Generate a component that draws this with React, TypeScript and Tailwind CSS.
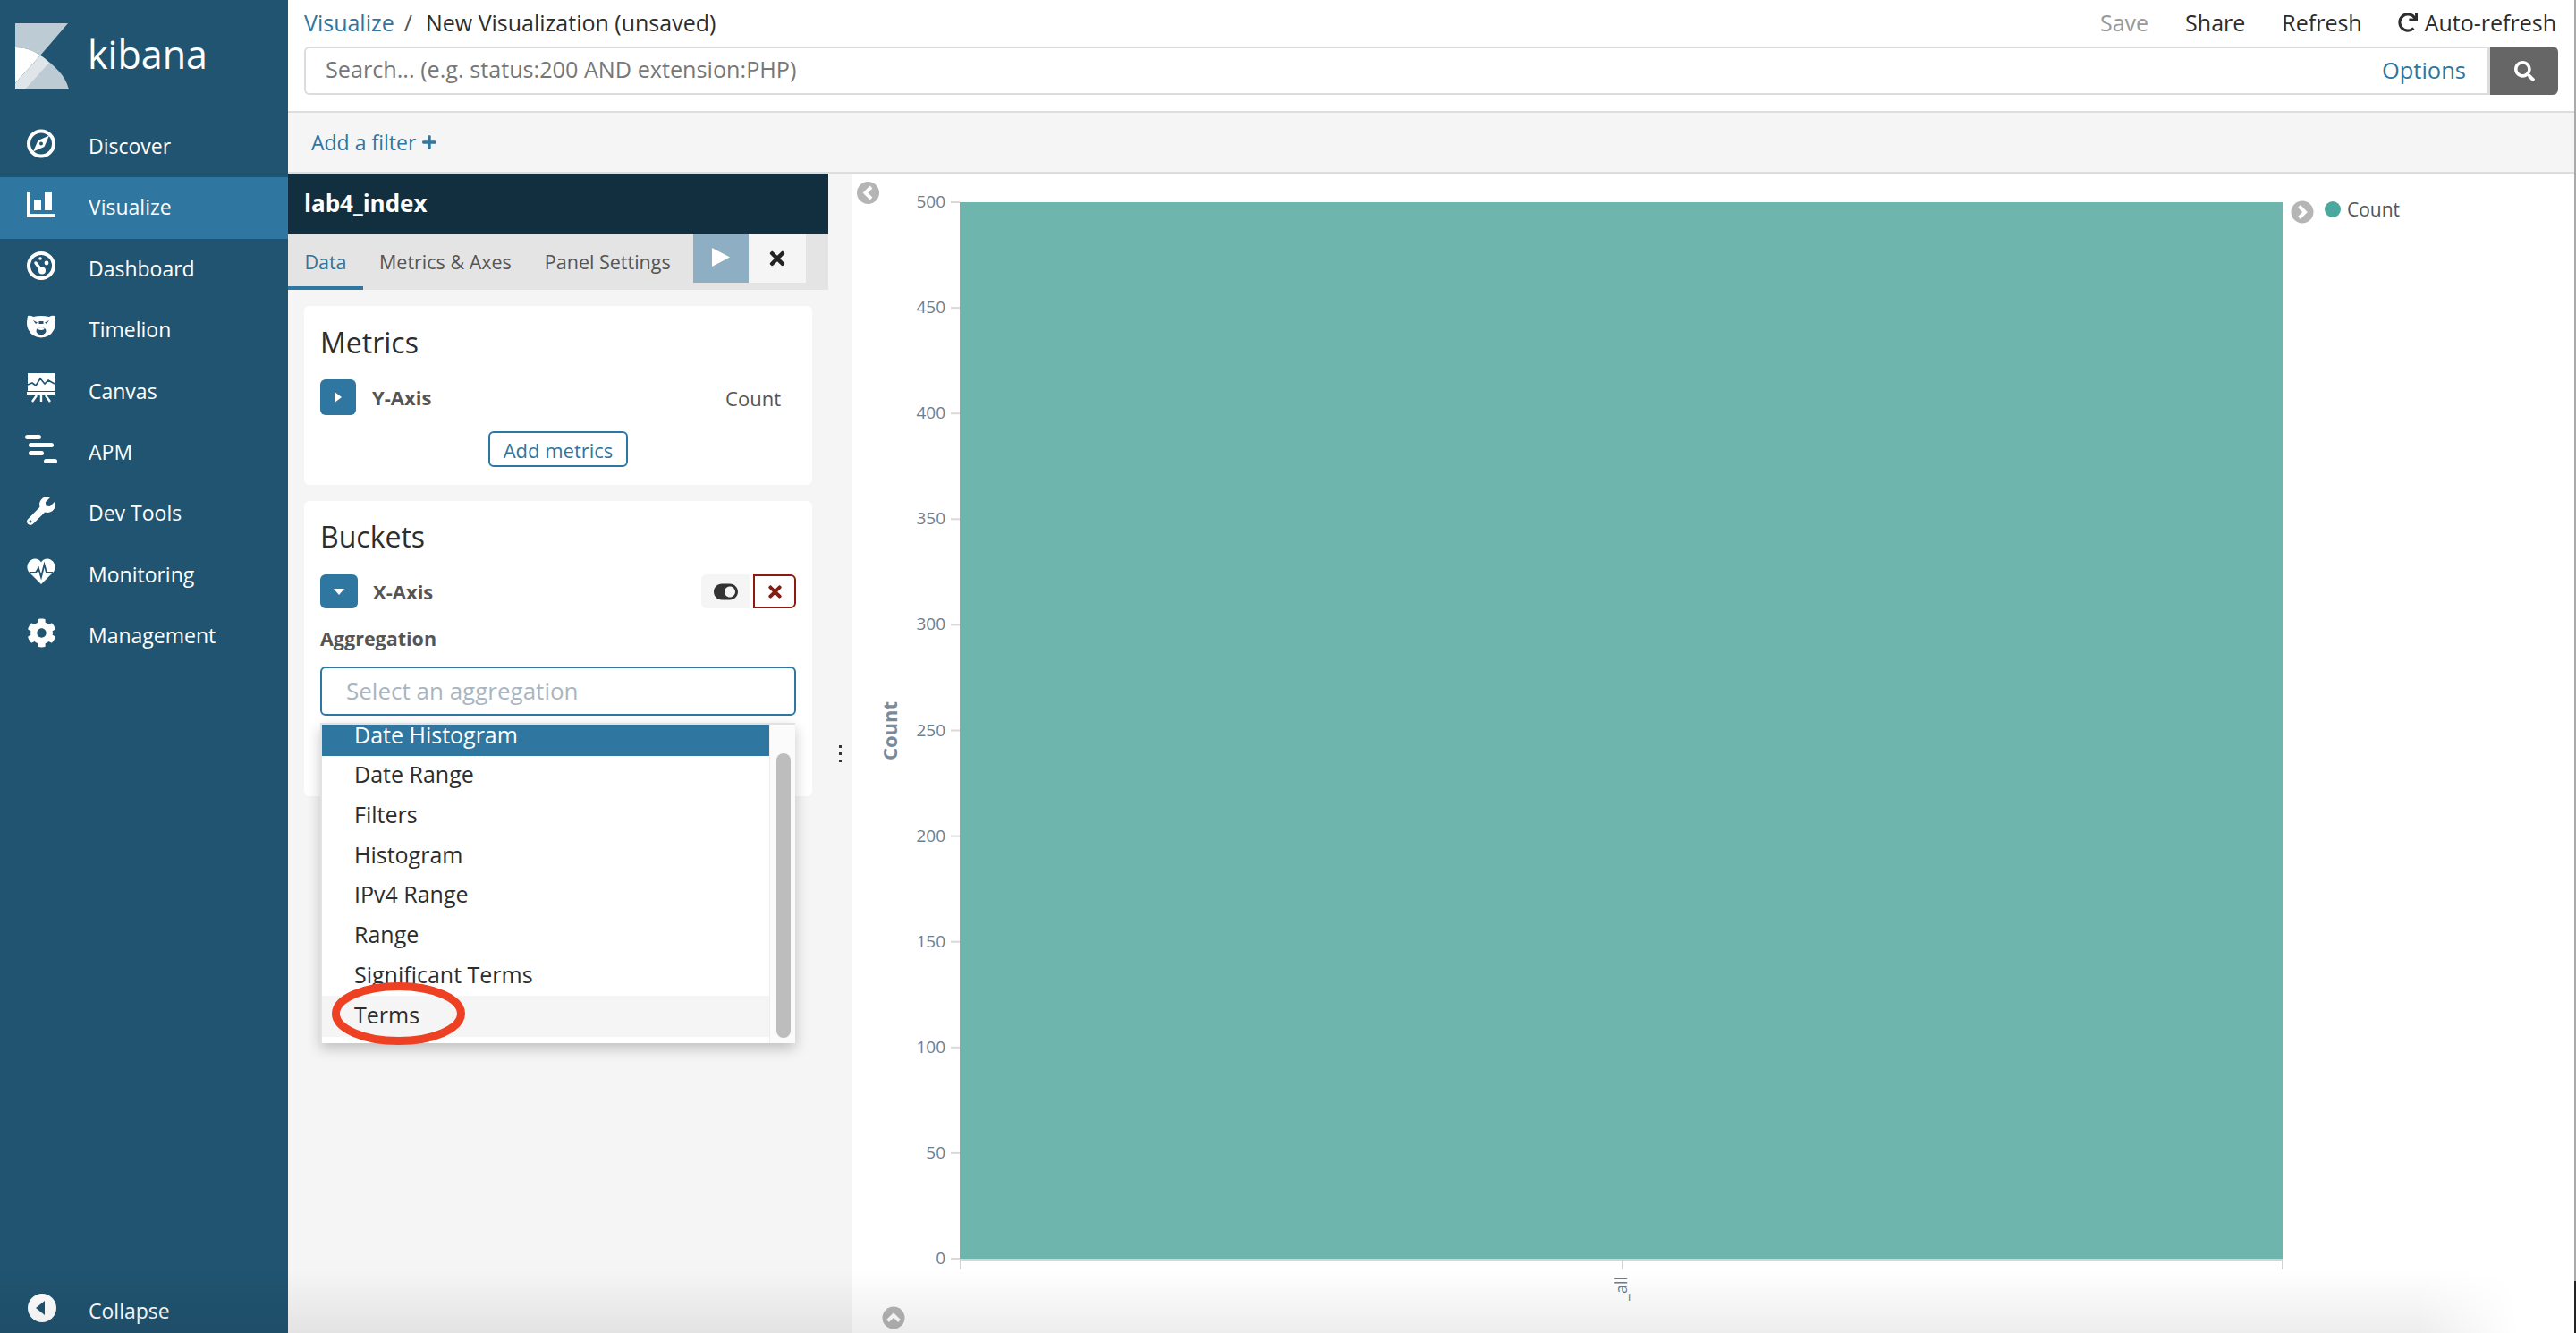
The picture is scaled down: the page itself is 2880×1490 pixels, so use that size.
import { FaCog, FaPlus, FaRedo, FaSearch, FaTimes, FaToggleOn, FaWrench } from "react-icons/fa";

const SIDEBAR_BG = "#215470";

function KibanaLogo() {
  return (
    <svg width="60" height="74" viewBox="0 0 60 74">
      <path d="M0 0H59L28 36C20 30 10 27 0 27Z" fill="#bdcbd4" />
      <path d="M28 36C44 47 56 58 60 74H11Z" fill="#bdcbd4" />
      <path d="M0 27C10 27 20 30 28 36L0 67Z" fill="#ffffff" />
      <path d="M28 36C32 38 34 40 38 44L11 74H0V67Z" fill="#dfe5e9" />
    </svg>
  );
}

function CompassIcon() {
  return (
    <svg width="32" height="33" viewBox="0 0 32 33" fill="none">
      <circle cx="16" cy="16.5" r="14" stroke="#fff" strokeWidth="4" />
      <path d="M25 7.5L19.5 20L7 25.5L12.5 13Z" fill="#fff" />
      <circle cx="16" cy="16.5" r="2" fill={SIDEBAR_BG} />
    </svg>
  );
}

function BarsIcon() {
  return (
    <svg width="32" height="28" viewBox="0 0 32 28" fill="#fff">
      <path d="M0 0H4V24H32V28H0Z" />
      <rect x="8" y="8" width="8" height="12" />
      <rect x="20" y="0" width="8" height="20" />
    </svg>
  );
}

function GaugeIcon() {
  return (
    <svg width="32" height="32" viewBox="0 0 32 32" fill="none">
      <circle cx="16" cy="16" r="14" stroke="#fff" strokeWidth="4" />
      <path d="M10 13L16 21" stroke="#fff" strokeWidth="3.5" strokeLinecap="round" />
      <circle cx="17" cy="21.5" r="4" fill="#fff" />
      <circle cx="22" cy="13" r="2.4" fill="#fff" />
      <circle cx="15" cy="8" r="1.8" fill="#fff" />
    </svg>
  );
}

function BearIcon() {
  return (
    <svg width="32" height="26" viewBox="0 0 32 26">
      <path
        d="M1 1Q4 0 7 2Q16 0 25 2Q28 0 31 1L32 8Q32 14 30 17Q26 25 16 25.5Q6 25 2 17Q0 14 0 8Z"
        fill="#fff"
      />
      <path d="M7 6L12 8.5L10 10Z M25 6L20 8.5L22 10Z" fill={SIDEBAR_BG} />
      <rect x="13.5" y="7" width="5" height="3" fill={SIDEBAR_BG} />
      <ellipse cx="16" cy="18" rx="5.5" ry="4.2" fill={SIDEBAR_BG} />
      <ellipse cx="16" cy="15.5" rx="3.5" ry="1.4" fill="#fff" />
    </svg>
  );
}

function CanvasIcon() {
  return (
    <svg width="32" height="33" viewBox="0 0 32 33" fill="none">
      <rect x="1" y="0" width="30" height="20" fill="#fff" />
      <path d="M1 13L6 11L10 14L15 6L20 12L24 8L31 12" stroke={SIDEBAR_BG} strokeWidth="1.6" />
      <rect x="0" y="21" width="32" height="3" fill="#fff" />
      <path d="M11 25L6 32M16 25V32M21 25L26 32" stroke="#fff" strokeWidth="2.4" />
    </svg>
  );
}

function ApmIcon() {
  return (
    <svg width="36" height="32" viewBox="0 0 36 32" fill="#fff" className="ml-[-2px]">
      <rect x="0" y="0" width="18" height="5" rx="2.5" />
      <rect x="4" y="9" width="28" height="5" rx="2.5" />
      <rect x="4" y="18" width="17" height="5" rx="2.5" />
      <rect x="21" y="27" width="15" height="5" rx="2.5" />
    </svg>
  );
}

function HeartIcon() {
  return (
    <svg width="32" height="29" viewBox="0 0 32 29" fill="none">
      <path d="M16 29L2 15C-2 9 2 1 9 0.5C12 0.5 14.5 2 16 4.5C17.5 2 20 0.5 23 0.5C30 1 34 9 30 15Z" fill="#fff" />
      <path d="M3 16H10L13 11L16 21L19.5 7L22 16H29" stroke={SIDEBAR_BG} strokeWidth="1.8" />
    </svg>
  );
}

function CollapseIcon() {
  return (
    <svg width="32" height="32" viewBox="0 0 32 32">
      <circle cx="16" cy="16" r="16" fill="#fff" />
      <path d="M19 8V24L9 16Z" fill={SIDEBAR_BG} />
    </svg>
  );
}

const navItems = [
  { label: "Discover", icon: <CompassIcon /> },
  { label: "Visualize", icon: <BarsIcon />, active: true },
  { label: "Dashboard", icon: <GaugeIcon /> },
  { label: "Timelion", icon: <BearIcon /> },
  { label: "Canvas", icon: <CanvasIcon /> },
  { label: "APM", icon: <ApmIcon /> },
  { label: "Dev Tools", icon: <FaWrench size={32} color="#fff" /> },
  { label: "Monitoring", icon: <HeartIcon /> },
  { label: "Management", icon: <FaCog size={33} color="#fff" /> },
];

function Sidebar() {
  return (
    <aside className="flex h-full w-[322px] shrink-0 flex-col bg-[#215470] text-white">
      <div className="flex h-[130px] items-start pl-[17px] pt-[26px]">
        <KibanaLogo />
        <span className="ml-[21px] mt-[7px] text-[43px] leading-[56px]">kibana</span>
      </div>
      {navItems.map((item) => (
        <div
          key={item.label}
          className={`flex h-[68.4px] items-center pl-[30px] ${item.active ? "bg-[#2f76a0]" : ""}`}
        >
          <span className="mb-[8px] flex w-[69px]">{item.icon}</span>
          <span className="pb-[2px] text-[23px] font-medium">{item.label}</span>
        </div>
      ))}
      <div className="mt-auto flex h-[60px] items-start pl-[31px] pt-[16px]">
        <CollapseIcon />
        <span className="ml-[36px] mt-[3px] text-[23px] leading-[32px]">Collapse</span>
      </div>
    </aside>
  );
}

function TopBar() {
  return (
    <header className="h-[126px] border-b-2 border-[#dddddd] bg-white">
      <div className="flex h-[52px] items-start justify-between pl-[18px] pr-[20px] pt-[9px] text-[25px] leading-[32px] text-[#2d2d2d]">
        <div className="flex">
          <span className="text-[#2f76a0]">Visualize</span>
          <span className="ml-[11px] text-[#555]">/</span>
          <span className="ml-[15px]">New Visualization (unsaved)</span>
        </div>
        <div className="flex items-center">
          <span className="text-[#999]">Save</span>
          <span className="ml-[41px]">Share</span>
          <span className="ml-[41px]">Refresh</span>
          <FaRedo size={22} color="#2d2d2d" className="ml-[40px]" />
          <span className="ml-[8px]">Auto-refresh</span>
        </div>
      </div>
      <div className="flex h-[54px] pl-[18px] pr-[18px]">
        <div className="flex flex-1 items-center justify-between rounded-l-[6px] border-2 border-r-[3px] border-[#dcdcdc] pb-[2px] pl-[22px] pr-[24px] text-[25.2px]">
          <span className="text-[#777]">Search... (e.g. status:200 AND extension:PHP)</span>
          <span className="text-[25.5px] text-[#2f76a0]">Options</span>
        </div>
        <div className="flex w-[76px] items-center justify-center rounded-r-[6px] bg-[#666666]">
          <FaSearch size={23} color="#fff" />
        </div>
      </div>
    </header>
  );
}

function FilterBar() {
  return (
    <div className="flex h-[68px] items-center border-b-2 border-[#dddddd] bg-[#f5f5f5] pl-[26px] text-[23px] text-[#2f76a0]">
      <span>Add a filter</span>
      <FaPlus size={18} className="ml-[6px]" />
    </div>
  );
}

function EditorTabs() {
  return (
    <div className="flex h-[62px] items-start bg-[#e4e4e4] text-[21.5px] text-[#555]">
      <div className="flex h-[62px] w-[84px] items-center justify-center border-b-4 border-[#2f76a0] pt-[4px] text-[#2f76a0]">
        Data
      </div>
      <div className="flex h-[62px] items-center pl-[18px]">Metrics &amp; Axes</div>
      <div className="flex h-[62px] items-center pl-[37px]">Panel Settings</div>
      <div className="ml-[25px] flex h-[54px] w-[62px] items-center justify-center bg-[#8eaec3] pb-[3px]">
        <svg width="20" height="21" viewBox="0 0 20 21">
          <path d="M0 0L20 10.5L0 21Z" fill="#fff" />
        </svg>
      </div>
      <div className="flex h-[54px] w-[64px] items-center justify-center bg-[#f5f5f5]">
        <FaTimes size={24} color="#222" />
      </div>
    </div>
  );
}

function MetricsCard() {
  return (
    <section className="h-[200px] rounded-[6px] bg-white pl-[18px] pr-[35px] pt-[18px]">
      <h2 className="h-[46px] text-[32px] leading-[46px] text-[#2d2d2d]">Metrics</h2>
      <div className="mt-[18px] flex h-[40px] items-center text-[22px] text-[#555]">
        <div className="flex h-[40px] w-[40px] items-center justify-center rounded-[6px] bg-[#2f76a0]">
          <svg width="8" height="12" viewBox="0 0 8 12">
            <path d="M0 0L8 6L0 12Z" fill="#fff" />
          </svg>
        </div>
        <span className="ml-[18px] font-bold">Y-Axis</span>
        <span className="ml-auto pt-[2px]">Count</span>
      </div>
      <div className="mt-[18px] flex justify-center">
        <button className="ml-[17px] h-[40px] w-[156px] rounded-[6px] border-2 border-[#2f76a0] pt-[2px] text-[22px] text-[#2f76a0]">
          Add metrics
        </button>
      </div>
    </section>
  );
}

const aggregations = ["Date Histogram", "Date Range", "Filters", "Histogram", "IPv4 Range", "Range", "Significant Terms", "Terms"];

function AggregationDropdown() {
  return (
    <div className="absolute left-[18px] top-[248px] z-10 flex h-[358px] w-[531px] overflow-visible border-t-2 border-l-2 border-[#e2e2e2] bg-white shadow-[0_6px_14px_rgba(0,0,0,0.22)]">
      <ul className="h-full w-[500px] overflow-hidden text-[25px] text-[#2d2d2d]">
        {aggregations.map((name, i) => (
          <li
            key={name}
            className={`flex h-[44.7px] items-center pb-[2px] pl-[36px] ${i === 0 ? "mt-[-10px] bg-[#2f76a0] text-white" : ""} ${
              name === "Terms" ? "h-[46px] bg-[#f5f5f5]" : ""
            }`}
          >
            {name}
          </li>
        ))}
      </ul>
      <div className="h-full flex-1 border-l border-[#eeeeee] bg-[#fbfbfb] pl-[7px] pt-[32px]">
        <div className="h-[318px] w-[16px] rounded-full bg-[#bdbdbd]" />
      </div>
      <svg className="absolute left-[11px] top-[288px]" width="149" height="70" viewBox="0 0 149 70" fill="none">
        <ellipse cx="74.5" cy="35" rx="70" ry="30.5" stroke="#ee4023" strokeWidth="9" />
      </svg>
    </div>
  );
}

function BucketsCard() {
  return (
    <section className="relative mt-[18px] h-[330px] rounded-[6px] bg-white pl-[18px] pr-[18px] pt-[17px]">
      <h2 className="h-[46px] text-[32px] leading-[46px] text-[#2d2d2d]">Buckets</h2>
      <div className="mt-[19px] flex h-[38px] items-center text-[22px] text-[#555]">
        <div className="flex h-[38px] w-[42px] items-center justify-center rounded-[6px] bg-[#2f76a0]">
          <svg width="12" height="7" viewBox="0 0 12 7">
            <path d="M0 0H12L6 7Z" fill="#fff" />
          </svg>
        </div>
        <span className="ml-[17px] font-bold">X-Axis</span>
        <div className="ml-auto flex h-[38px] w-[54px] items-center justify-center rounded-l-[6px] bg-[#f5f5f5]">
          <FaToggleOn size={27} color="#333" />
        </div>
        <div className="ml-[4px] flex h-[38px] w-[48px] items-center justify-center rounded-r-[6px] border-2 border-[#8b1a10]">
          <FaTimes size={21} color="#8b1a10" />
        </div>
      </div>
      <div className="mt-[19px] text-[21.5px] font-bold leading-[30px] text-[#555]">Aggregation</div>
      <div className="mt-[16px] flex h-[55px] items-center rounded-[6px] border-2 border-[#2f76a0] pl-[27px] text-[26px] text-[#a9b6c1]">
        Select an aggregation
      </div>
      <AggregationDropdown />
    </section>
  );
}

function EditorPanel() {
  return (
    <div className="flex h-full w-[630px] shrink-0 bg-[#f5f5f5]">
      <div className="w-[604px]">
        <div className="flex h-[68px] items-center bg-[#122f40] pb-[2px] pl-[18px] text-[26px] font-bold text-white">
          lab4_index
        </div>
        <EditorTabs />
        <div className="pl-[18px] pr-[18px] pt-[18px]">
          <MetricsCard />
          <BucketsCard />
        </div>
      </div>
      <div className="flex flex-1 flex-col items-center justify-center gap-[5px]">
        <span className="h-[3px] w-[3px] bg-[#333]" />
        <span className="h-[3px] w-[3px] bg-[#333]" />
        <span className="h-[3px] w-[3px] bg-[#333]" />
      </div>
    </div>
  );
}

const yTicks = [500, 450, 400, 350, 300, 250, 200, 150, 100, 50, 0];

function Chart() {
  return (
    <svg className="h-full flex-1" viewBox="952 194 1926 1296" width="1926" height="1296">
      <rect x="1073" y="226" width="1479" height="1181" fill="#6eb5ae" />
      <rect x="1073" y="1407" width="1479" height="2" fill="#d3d6d6" />
      <path d="M1073.5 1409V1419M1813.5 1409V1419M2551.5 1409V1419" stroke="#d3d3d3" />
      {yTicks.map((t) => {
        const y = 226 + ((500 - t) / 500) * 1181;
        return (
          <g key={t}>
            <rect x="1063" y={y - 1} width="10" height="2" fill="#d9d9d9" />
            <text x="1057" y={y + 6} textAnchor="end" fontSize="19" fill="#6f7e8c">
              {t}
            </text>
          </g>
        );
      })}
      <text transform="translate(1819 1454) rotate(-90)" fontSize="18" fill="#6f7e8c">
        _all
      </text>
      <text transform="translate(1003 817) rotate(-90)" textAnchor="middle" fontSize="22" fontWeight="700" fill="#7b8a99">
        Count
      </text>
      <circle cx="970.5" cy="215.5" r="12.5" fill="#b5b5b5" />
      <path d="M974 209L967.5 215.5L974 222" stroke="#fff" strokeWidth="4" fill="none" />
      <circle cx="2574" cy="237" r="12.5" fill="#b5b5b5" />
      <path d="M2570.5 230.5L2577 237L2570.5 243.5" stroke="#fff" strokeWidth="4" fill="none" />
      <circle cx="999" cy="1473" r="12.5" fill="#b5b5b5" />
      <path d="M992.5 1476.5L999 1470L1005.5 1476.5" stroke="#fff" strokeWidth="4" fill="none" />
      <circle cx="2608" cy="234" r="9" fill="#4aa89e" />
      <text x="2624" y="242" fontSize="21" fill="#555">
        Count
      </text>
    </svg>
  );
}

export default function App() {
  return (
    <div className="relative flex h-[1490px] w-[2880px] overflow-hidden bg-white font-['Open_Sans',sans-serif]">
      <Sidebar />
      <main className="flex h-full flex-1 flex-col">
        <TopBar />
        <FilterBar />
        <div className="flex h-[1296px]">
          <EditorPanel />
          <Chart />
        </div>
      </main>
      <div className="flex h-full w-[2px] shrink-0 flex-col">
        <div className="h-[1432px] bg-[#aaaaaa]" />
        <div className="flex-1 bg-[#222222]" />
      </div>
      {/* bottom window shadow */}
      <div className="pointer-events-none absolute bottom-0 left-0 z-20 h-[70px] w-[2815px] bg-gradient-to-b from-transparent to-black/[0.07] [mask-image:linear-gradient(to_right,black_96%,transparent)]" />
    </div>
  );
}
